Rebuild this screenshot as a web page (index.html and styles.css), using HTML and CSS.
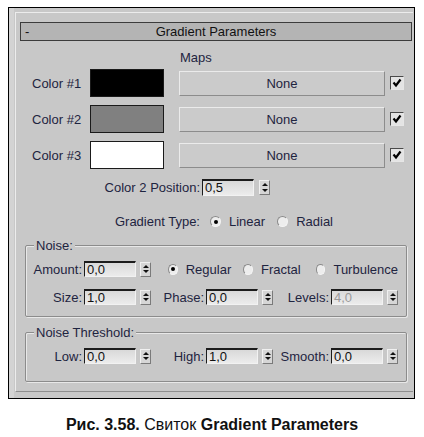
FILE: index.html
```html
<!DOCTYPE html>
<html lang="ru">
<head>
  <meta charset="UTF-8">
  <title>Gradient Parameters</title>
  <link rel="stylesheet" href="styles.css">
</head>
<body>
  <div class="window">
    <div class="rollout">
      <div class="roll-head">
        <span class="minus">-</span>
        <span class="roll-title">Gradient Parameters</span>
      </div>

      <div class="maps">Maps</div>

      <div class="colors">
        <div class="color-row">
          <span class="lbl">Color #1</span>
          <span class="swatch sw-black"></span>
          <span class="btn">None</span>
          <span class="check"><svg width="12" height="12" viewBox="0 0 12 12"><path d="M2.5 5.5 L5 8.5 L9.5 2.5" stroke="#000" stroke-width="2.2" fill="none"/></svg></span>
        </div>
        <div class="color-row">
          <span class="lbl">Color #2</span>
          <span class="swatch sw-gray"></span>
          <span class="btn">None</span>
          <span class="check"><svg width="12" height="12" viewBox="0 0 12 12"><path d="M2.5 5.5 L5 8.5 L9.5 2.5" stroke="#000" stroke-width="2.2" fill="none"/></svg></span>
        </div>
        <div class="color-row">
          <span class="lbl">Color #3</span>
          <span class="swatch sw-white"></span>
          <span class="btn">None</span>
          <span class="check"><svg width="12" height="12" viewBox="0 0 12 12"><path d="M2.5 5.5 L5 8.5 L9.5 2.5" stroke="#000" stroke-width="2.2" fill="none"/></svg></span>
        </div>
      </div>

      <div class="pos-row">
        <span class="lbl-r">Color 2 Position:</span>
        <span class="num num-tall">0,5</span>
        <span class="spin"></span>
      </div>

      <div class="type-row">
        <span class="lbl-r">Gradient Type:</span>
        <span class="radio on"></span><span class="opt">Linear</span>
        <span class="radio r-far"></span><span class="opt">Radial</span>
      </div>

      <fieldset class="group noise">
        <legend>Noise:</legend>
        <div class="frow">
          <span class="flbl">Amount:</span>
          <span class="num">0,0</span>
          <span class="spin"></span>
          <div class="radios">
            <span class="radio on"></span><span class="opt">Regular</span>
            <span class="radio r-mid"></span><span class="opt">Fractal</span>
            <span class="radio r-wide"></span><span class="opt">Turbulence</span>
          </div>
        </div>
        <div class="frow">
          <span class="flbl">Size:</span>
          <span class="num">1,0</span>
          <span class="spin"></span>
          <span class="flbl">Phase:</span>
          <span class="num">0,0</span>
          <span class="spin"></span>
          <span class="flbl">Levels:</span>
          <span class="num off">4,0</span>
          <span class="spin"></span>
        </div>
      </fieldset>

      <fieldset class="group thresh">
        <legend>Noise Threshold:</legend>
        <div class="frow">
          <span class="flbl">Low:</span>
          <span class="num">0,0</span>
          <span class="spin"></span>
          <span class="flbl">High:</span>
          <span class="num">1,0</span>
          <span class="spin"></span>
          <span class="flbl">Smooth:</span>
          <span class="num">0,0</span>
          <span class="spin"></span>
        </div>
      </fieldset>
    </div>
  </div>

  <p class="caption"><b>Рис. 3.58.</b> Свиток <b>Gradient Parameters</b></p>
</body>
</html>
```

FILE: styles.css
```css
body {
  margin: 0;
  background: #fff;
  font-family: "Liberation Sans", Arial, sans-serif;
  font-size: 13px;
  color: #1e2440;
}

.window {
  width: 399px;
  height: 386px;
  margin: 7px 0 0 8px;
  padding: 4px 0 0 6px;
  border: 1px solid #000;
  background: linear-gradient(to right, #d3d3d3 0 5px, #c8c8c8 5px);
}

.rollout {
  box-sizing: border-box;
  width: 398px;
  height: 380px;
  padding: 9px 0 0 4px;
  border-top: 1px solid #ececec;
  border-left: 1px solid #ececec;
  border-bottom: 1px solid #8e8e8e;
  background: #c8c8c8;
}

.roll-head {
  box-sizing: border-box;
  width: 392px;
  height: 19px;
  border: 1px solid #3c3c3c;
  background: #b4b4b4;
  display: grid;
  grid-template-columns: 1fr auto 1fr;
  align-items: center;
  line-height: 17px;
  color: #111;
}

.minus {
  padding-left: 4px;
}

.maps {
  margin: 9px 0 0 160px;
  line-height: 15px;
}

.colors {
  margin-top: 4px;
  display: grid;
  gap: 8px;
}

.color-row {
  display: flex;
  align-items: center;
  height: 28px;
  padding-left: 12px;
}

.lbl {
  width: 58px;
}

.swatch {
  box-sizing: border-box;
  width: 74px;
  height: 28px;
  border: 1px solid #1a1a1a;
}

.sw-black { background: #000; }
.sw-gray { background: #808080; }
.sw-white { background: #fff; }

.btn {
  box-sizing: border-box;
  width: 206px;
  height: 25px;
  margin-left: 15px;
  border: 1px solid;
  border-color: #ebebeb #8c8c8c #8c8c8c #ebebeb;
  background: #cbcbcb;
  text-align: center;
  line-height: 23px;
}

.check {
  box-sizing: border-box;
  width: 14px;
  height: 14px;
  margin-left: 5px;
  border: 1px solid;
  border-color: #4a4a4a #e6e6e6 #e6e6e6 #4a4a4a;
  background: #e4e4e4;
  display: flex;
  align-items: center;
  justify-content: center;
}

.pos-row,
.type-row {
  display: flex;
  align-items: center;
}

.pos-row {
  margin-top: 10px;
  height: 17px;
}

.type-row {
  margin-top: 18px;
  height: 15px;
}

.lbl-r {
  box-sizing: border-box;
  width: 182px;
  padding-right: 2px;
  text-align: right;
}

.num {
  box-sizing: border-box;
  width: 52px;
  height: 16px;
  padding-left: 2px;
  border-style: solid;
  border-width: 2px 1px 1px 1px;
  border-color: #1c1c1c #f2f2f2 #f2f2f2 #1c1c1c;
  background: linear-gradient(#d9d9d9, #ececec);
  line-height: 13px;
  color: #111;
}

.num-tall {
  height: 17px;
  line-height: 14px;
}

.num.off {
  color: #9a9a9a;
}

.spin {
  box-sizing: border-box;
  width: 11px;
  height: 15px;
  border: 1px solid;
  border-color: #f0f0f0 #7a7a7a #7a7a7a #f0f0f0;
  background: #d6d6d6;
  display: flex;
  flex-direction: column;
  align-items: center;
  justify-content: space-evenly;
}

.spin::before,
.spin::after {
  content: "";
  width: 0;
  height: 0;
  border-left: 3px solid transparent;
  border-right: 3px solid transparent;
}

.spin::before {
  border-bottom: 3px solid #111;
}

.spin::after {
  border-top: 3px solid #111;
}

.pos-row .spin {
  margin-left: 5px;
}

.radio {
  box-sizing: border-box;
  width: 11px;
  height: 11px;
  border-radius: 50%;
  border: 1px solid;
  border-color: #8a8a8a #f4f4f4 #f4f4f4 #8a8a8a;
  background: #ededed;
  display: flex;
  align-items: center;
  justify-content: center;
}

.radio.on::after {
  content: "";
  width: 4px;
  height: 4px;
  border-radius: 50%;
  background: #000;
}

.opt {
  margin-left: 8px;
}

.type-row .radio {
  margin-left: 8px;
}

.type-row .r-far {
  margin-left: 12px;
}

.group {
  box-sizing: border-box;
  width: 382px;
  min-width: 0;
  margin: 9px 0 0 5px;
  padding: 8px 0 11px 0;
  border: 1px solid #8c8c8c;
  border-radius: 2px;
  box-shadow: inset 1px 1px 0 #e8e8e8, 1px 1px 0 #e8e8e8;
}

.thresh {
  margin-top: 8px;
  padding-bottom: 17px;
}

.group legend {
  margin-left: 8px;
  padding: 0 2px;
  line-height: 15px;
  background: #c8c8c8;
}

.frow {
  display: grid;
  grid-template-columns: 58px 52px 15px 55px 52px 15px 58px 52px 15px;
  align-items: center;
  height: 16px;
}

.frow + .frow {
  margin-top: 12px;
}

.flbl {
  padding-right: 2px;
  text-align: right;
}

.frow .spin {
  justify-self: end;
}

.radios {
  grid-column: 4 / -1;
  display: flex;
  align-items: center;
  padding-left: 17px;
}

.radios .r-mid {
  margin-left: 12px;
}

.radios .r-wide {
  margin-left: 15px;
}

.caption {
  margin: 17px 0 0;
  text-align: center;
  font-size: 16px;
  color: #111;
}
```
